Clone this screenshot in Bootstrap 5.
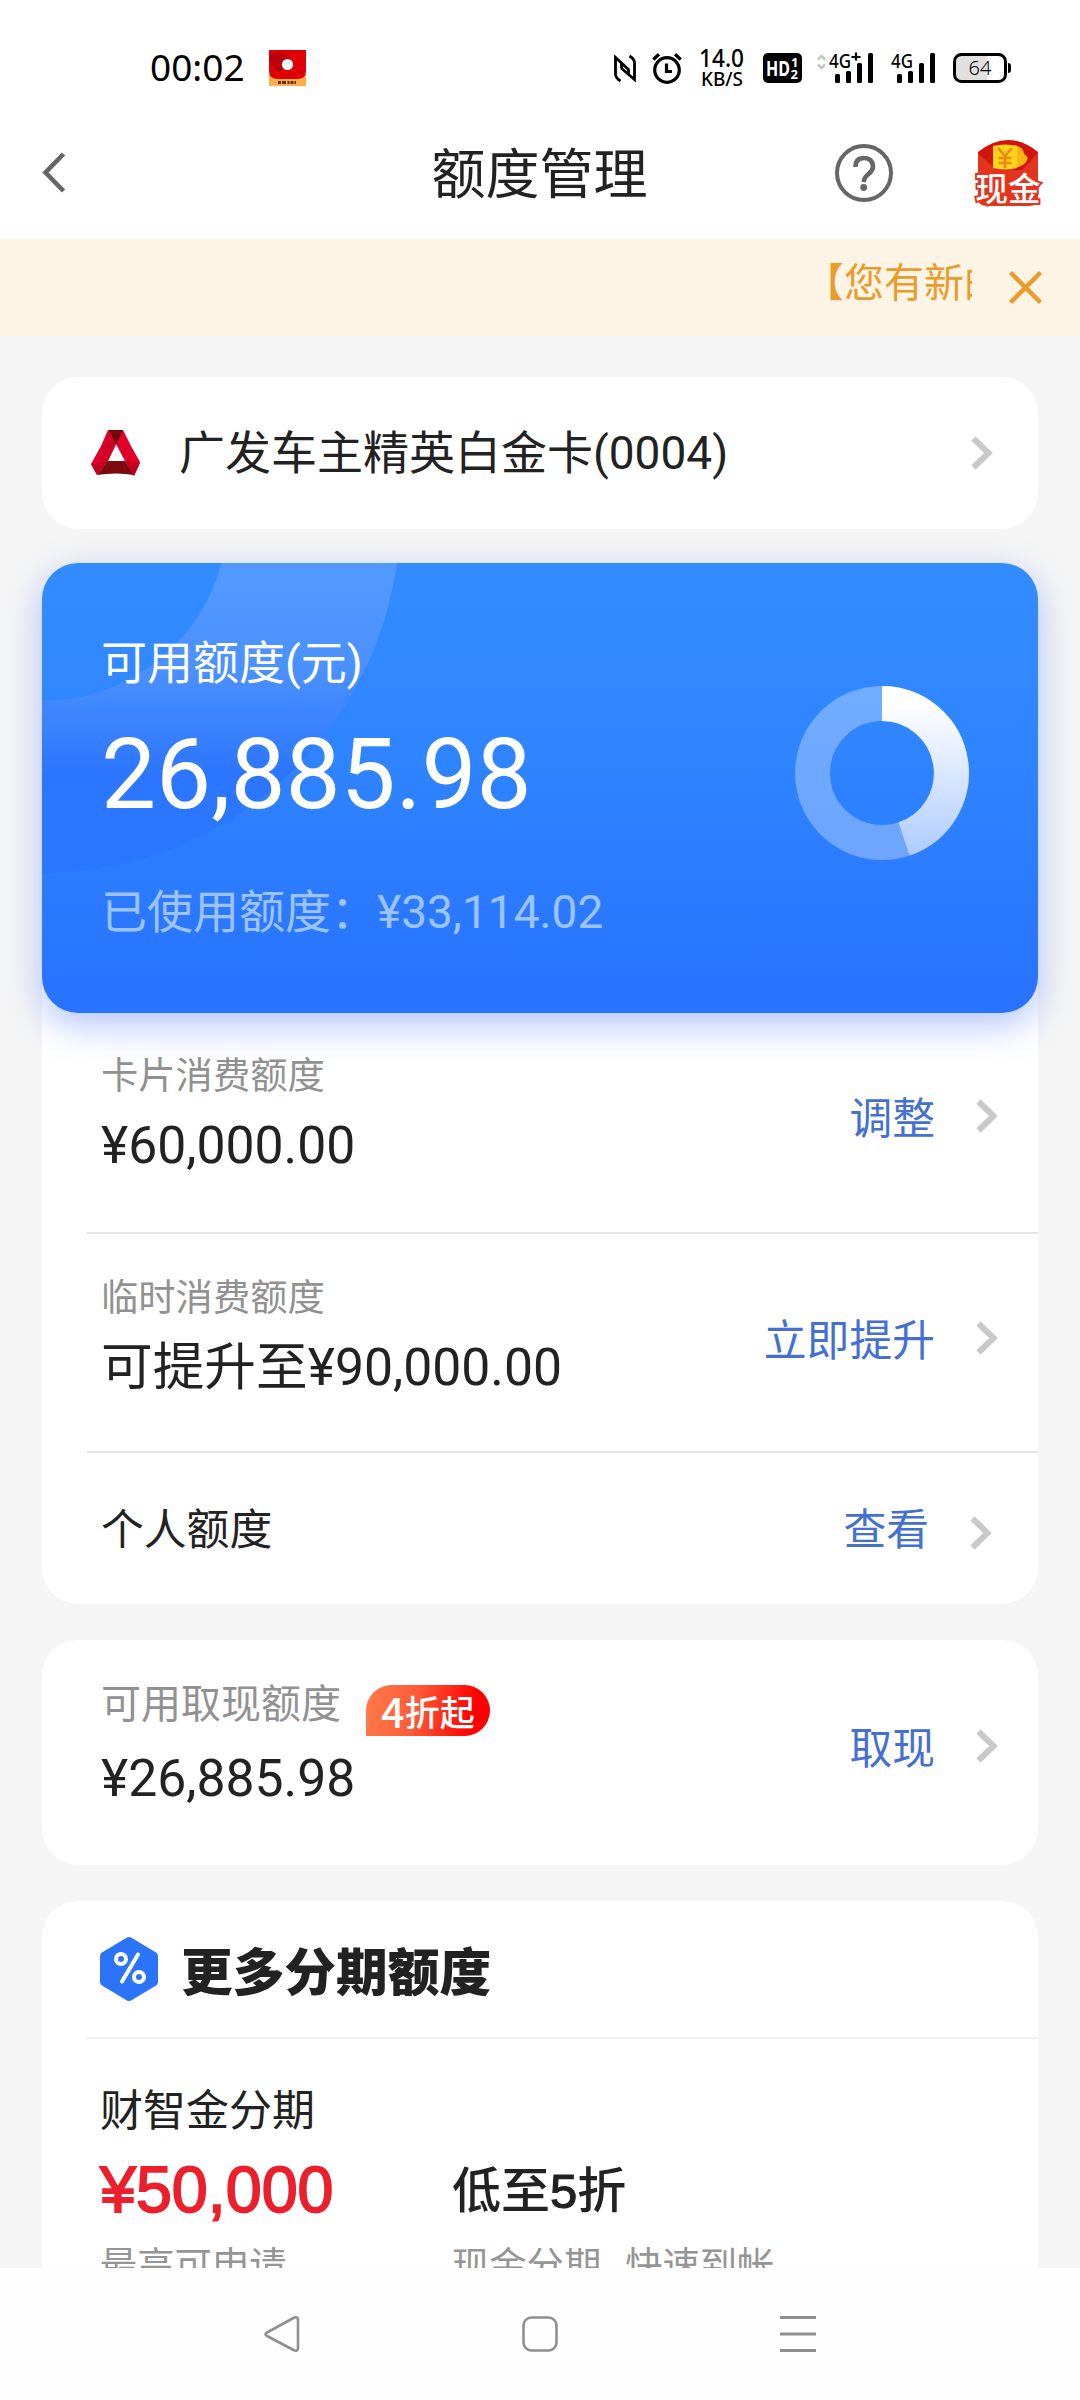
<!DOCTYPE html>
<html lang="zh-CN">
<head>
<meta charset="utf-8">
<meta name="viewport" content="width=device-width, initial-scale=1">
<title>额度管理</title>
<link rel="stylesheet" href="https://cdn.jsdelivr.net/npm/bootstrap@5.3.0/dist/css/bootstrap.min.css">
<style>
  body{font-family:Roboto,"Noto Sans CJK SC",sans-serif;color:#222;background:#fff;-webkit-font-smoothing:antialiased}
  svg{display:block;flex:none;overflow:visible}
  .screen{width:1080px;height:2400px}
  .status{height:110px;padding:26px 69px 0 150px}
  .clock{font:400 37px/82px "Noto Sans",sans-serif;color:#000;width:119px;margin-top:-2px}
  .status svg text{font-family:"Noto Sans",sans-serif}
  .topbar{height:129px;padding:0 40px 3px 42px}
  .topbar .side{width:205px}
  .topbar h1{font-size:54px;line-height:60px;font-weight:400;margin:0 3px 0 0;padding-top:6px}
  .content{background:#f5f5f5;height:2029px}
  .notice{height:97px;background:#fef4e5;color:#e89c2c;padding-right:38px}
  .notice .marquee{width:168px;height:50px;font-size:40px;line-height:50px;margin-top:-8px;margin-right:37px}
  .panel{margin:0 42px;background:#fff;border-radius:36px}
  .bank{height:152px;margin-top:41px;padding:0 45px 0 49px;font-size:46px}
  .bank .cname{margin-left:38px}
  .limit{height:450px;margin:34px 42px -60px;border-radius:36px;color:#fff;padding:0 69px 0 59px;
    background:linear-gradient(#338cff,#2f85ff 40%,#2872ff);box-shadow:0 12px 36px rgba(52,100,255,.38)}
  .limit .halo{left:0;top:0}
  .limit .cap{font-size:46px;line-height:56px;margin-top:72px}
  .limit .big{font-size:98px;line-height:110px;margin-top:29px}
  .limit .used{font-size:46px;line-height:56px;margin-top:54px;color:#9dc3ff}
  .limit .donut{margin-top:123px}
  .details{padding-top:60px}
  .entry{margin-left:45px;padding:38px 40px 0 14px;height:221px;border-bottom:2px solid #e6e6e6}
  .entry.second{height:219px;padding-top:39px}
  .entry.third{height:151px;padding:47px 46px 0 14px;border:0}
  .lbl{font-size:37.3px;line-height:50px;color:#919191}
  .amt{font-size:51.7px;line-height:60px;margin-top:15px}
  .act{font-size:42.8px;line-height:60px;color:#4370d2;gap:41px;margin-top:38px}
  .entry.third .act{margin-top:0}
  .act svg{margin-top:-7px}
  .entry.third .act svg{margin-top:6px}
  .cash{height:225px;margin-top:36px;padding:40px 40px 0 59px}
  .cash .lbl{font-size:40px}
  .cash .amt{margin-top:13px}
  .cash .act{margin-top:39px}
  .off{width:124px;height:51px;margin-left:25px;margin-top:5px;border-radius:26px 26px 26px 0;background:linear-gradient(100deg,#ff7d4a,#ff5a38 40%,#f00 85%);
    color:#fff;font:500 35px/47px "Noto Sans CJK SC",sans-serif}
  .off span{font-size:41px;line-height:1}
  .more{margin-top:36px;height:700px}
  .more .hd{height:138px;margin-left:45px;padding-left:13px;border-bottom:2px solid #f1f1f1;font-weight:700;font-size:51.7px;line-height:60px}
  .more .hd b{margin-left:23px;padding-top:9px}
  .plan{padding:46px 0 0 58px}
  .plan .pname{font-size:43px;line-height:52px}
  .plan .c1{width:352px}
  .money{font-family:"Liberation Sans",sans-serif;font-size:64.600px;line-height:66px;margin-top:20px;color:#ec1f2c;-webkit-text-stroke:1.8px #ec1f2c}
  .rate{font-family:"Noto Sans CJK SC",sans-serif;font-weight:500;font-size:49px;line-height:66px;margin-top:69px}
  .rate span{font-family:"Liberation Sans",sans-serif;line-height:1;-webkit-text-stroke:1.2px}
  .hint{font-size:37.3px;line-height:50px;color:#959595;white-space:nowrap}
  .c1 .hint{margin-top:18px}
  .rate + .hint{margin-top:21px}
  .sysnav{height:132px;background:#fefefe;padding:0 264px}
</style>
</head>
<body>
<div class="screen d-flex flex-column overflow-hidden">

  <div class="status d-flex align-items-center">
    <div class="clock">00:02</div>
    <svg width="37" height="36" viewBox="0 0 37 36">
      <path fill="#fcb045" d="M0 24h37v12H0z"/>
      <path fill="#e00008" d="M0 0h37v21q0 8-9 8H9q-9 0-9-8z"/>
      <path fill="#a3000a" d="M0 4q14-6 22 6l-10 12Q4 20 0 10z" opacity=".6"/>
      <circle cx="18.500" cy="14.500" r="5.600" fill="#fff"/>
      <path stroke="#6b2a10" stroke-width="3" stroke-dasharray="3 1 4 1.500 2 1" d="M9 32.500h18"/>
    </svg>
    <div class="d-flex align-items-center ms-auto">
      <svg width="22" height="29" viewBox="0 0 22 29" fill="none" stroke="#000" stroke-width="2.800">
        <path d="M6.500 27Q1.500 24 1.500 20V3.500L15 16M15.500 2Q20.500 5 20.500 9v16.500L7 14M7.500 14V8.500M14.500 15.500V21"/>
      </svg>
      <svg class="ms-3" width="30" height="32" viewBox="0 0 30 32" fill="none" stroke="#000" stroke-width="3.200">
        <circle cx="15" cy="18" r="12.300"/><path d="M14.500 11.500v8h5.500M1.300 7.500 7 2.300M28.700 7.500 23 2.300"/>
      </svg>
      <svg width="46" height="38" viewBox="0 0 46 38" style="margin-left:17px">
        <text x="0" y="18" font-size="25" font-weight="500" textLength="45" lengthAdjust="spacingAndGlyphs">14.0</text>
        <text x="2" y="37" font-size="19" font-weight="500" textLength="42" lengthAdjust="spacingAndGlyphs">KB/S</text>
      </svg>
      <svg width="39" height="30" viewBox="0 0 39 30" style="margin-left:18px">
        <rect width="39" height="30" rx="5"/>
        <text x="3" y="23" font-size="22" font-weight="700" fill="#fff" textLength="24" lengthAdjust="spacingAndGlyphs">HD</text>
        <text x="28" y="13.500" font-size="13" font-weight="700" fill="#fff">1</text>
        <text x="27.500" y="26" font-size="13" font-weight="700" fill="#fff">2</text>
      </svg>
      <svg width="57" height="30" viewBox="0 0 57 30" style="margin-left:15px">
        <path d="M1 6.500 4.500 3 8 6.500M1 11.500 4.500 15 8 11.500" fill="none" stroke="#c4c4c4" stroke-width="2.500"/>
        <text x="12" y="15" font-size="20" font-weight="500" textLength="22" lengthAdjust="spacingAndGlyphs">4G</text>
        <path d="M34.500 4h9M39-.500v8" stroke="#000" stroke-width="2.200"/>
        <g><rect x="18" y="21" width="5" height="9" rx="1.500"/><rect x="29" y="18" width="5" height="12" rx="1.500"/><rect x="40" y="10" width="5" height="20" rx="1.500"/><rect x="51" y="0" width="5" height="30" rx="1.500"/></g>
      </svg>
      <svg width="45" height="30" viewBox="0 0 45 30" style="margin-left:17px">
        <text x="0" y="15" font-size="20" font-weight="500" textLength="22" lengthAdjust="spacingAndGlyphs">4G</text>
        <rect x="6" y="21" width="5" height="9" rx="1.500"/><rect x="17" y="18" width="5" height="12" rx="1.500"/><rect x="28" y="10" width="5" height="20" rx="1.500"/><rect x="39" y="0" width="5" height="30" rx="1.500"/>
      </svg>
      <svg width="58" height="30" viewBox="0 0 58 30" style="margin-left:17px">
        <path fill="#e0e0e0" d="M8 3h26v24H8q-5 0-5-5V8q0-5 5-5z"/>
        <rect x="1.500" y="1.500" width="51" height="27" rx="7" fill="none" stroke="#000" stroke-width="3"/>
        <path d="M55 10q3 0 3 3v4q0 3-3 3z"/>
        <text x="27" y="22" font-size="20" font-weight="300" text-anchor="middle">64</text>
      </svg>
    </div>
  </div>

  <div class="topbar d-flex align-items-center justify-content-between">
    <div class="side">
      <svg width="24" height="42" viewBox="0 0 24 42" fill="none" stroke="#666" stroke-width="4.600"><path d="M21.500 2 3.500 20.500 21.500 39"/></svg>
    </div>
    <h1>额度管理</h1>
    <div class="side d-flex align-items-center justify-content-between">
      <svg width="58" height="58" viewBox="0 0 58 58" fill="none" stroke="#666">
        <circle cx="29" cy="29" r="27" stroke-width="4"/>
        <path d="M20.500 23Q20.500 14 29 14T38 22.500Q38 26.500 33.500 30T28.700 38" stroke-width="4.600"/>
        <circle cx="28.700" cy="43.500" r="3.400" fill="#666" stroke="none"/>
      </svg>
      <svg width="64" height="66" viewBox="0 0 64 66">
        <path fill="#cf150c" d="M2 12Q32-12 62 12V36H2z"/>
        <path fill="#e5341d" d="M2 13 20 30H46L62 13V58Q62 66 53 66H11Q2 66 2 58z"/>
        <path fill="#fbb616" d="M38 5q10 2 10 9 6 3 2 8t-12 6z"/>
        <path fill="#ffd21c" d="M17 6q12-3 24 0v22q-12 3-24 0z"/>
        <path fill="none" stroke="#e98a12" stroke-width="2.600" d="M22 8l7 8 7-8M29 16v12M22.500 18h13M22.500 23h13"/>
        <text x="32" y="61" font-size="32.500" font-weight="500" fill="#fff" stroke="#e5341d" stroke-width="4" paint-order="stroke" text-anchor="middle">现金</text>
      </svg>
    </div>
  </div>

  <div class="content overflow-hidden">
    <div class="notice d-flex align-items-center justify-content-end">
      <div class="marquee overflow-hidden text-nowrap">【您有新的</div>
      <svg width="33" height="33" viewBox="0 0 33 33" stroke="#e89c2c" stroke-width="4.500"><path d="M1.500 1.500l30 30M31.500 1.500l-30 30"/></svg>
    </div>

    <div class="panel bank d-flex align-items-center">
      <svg width="50" height="46" viewBox="0 0 50 46">
        <path fill="#e0002a" d="M17 0H32L40 16 49 32 43 46 34 31 25 14 17 31 6 45 0 34 10 16z"/>
        <path fill="#6e0a0c" d="M18 0H32L25 15z"/>
        <path fill="#c00020" d="M18 0 25 15 17 31 8 30z" opacity=".45"/>
        <path fill="#7c0b0f" d="M17 31H34L43 45Q25 42 6 45z"/>
        <path fill="#c30020" d="M0 34 17 31 6 45zM49 33 34 31 43 46z"/>
      </svg>
      <div class="cname">广发车主精英白金卡(0004)</div>
      <svg class="ms-auto" width="22" height="34" viewBox="0 0 22 34" fill="none" stroke="#c9c9c9" stroke-width="6"><path d="M2.500 2.500l15 14.500-15 14.500"/></svg>
    </div>

    <div class="limit position-relative d-flex justify-content-between align-items-start overflow-visible">
      <svg class="halo position-absolute" width="996" height="450" viewBox="0 0 996 450">
        <defs>
          <linearGradient id="halo" gradientUnits="userSpaceOnUse" x1="0" y1="0" x2="0" y2="310"><stop offset="0" stop-color="#539aff"/><stop offset=".35" stop-color="#4a90ff"/><stop offset=".68" stop-color="#2c76ff"/><stop offset="1" stop-color="#2a77ff"/></linearGradient>
          <clipPath id="edge"><rect width="996" height="450" rx="36"/></clipPath>
        </defs>
        <path clip-path="url(#edge)" fill="url(#halo)" fill-rule="evenodd" d="M-358-48a358 358 0 0 0 716 0a358 358 0 0 0-716 0zM-186-48a186 186 0 0 0 372 0a186 186 0 0 0-372 0z"/>
      </svg>
      <div class="position-relative">
        <div class="cap">可用额度(元)</div>
        <div class="big">26,885.98</div>
        <div class="used">已使用额度：¥33,114.02</div>
      </div>
      <svg class="donut position-relative" width="174" height="174" viewBox="-87 -87 174 174" fill="none" stroke-width="35">
        <defs><linearGradient id="arc" gradientUnits="userSpaceOnUse" x1="0" y1="-70" x2="0" y2="87"><stop offset="0" stop-color="#fff"/><stop offset="1" stop-color="#abcaff"/></linearGradient></defs>
        <circle r="69.500" stroke="#fff" stroke-opacity=".31"/>
        <path stroke="url(#arc)" d="M0-69.500A69.500 69.500 0 0 1 22 65.900"/>
      </svg>
    </div>

    <div class="panel details">
      <div class="entry d-flex justify-content-between align-items-start">
        <div><div class="lbl">卡片消费额度</div><div class="amt">¥60,000.00</div></div>
        <div class="act d-flex align-items-center">调整<svg width="22" height="34" viewBox="0 0 22 34" fill="none" stroke="#c9c9c9" stroke-width="6"><path d="M2.500 2.500l15 14.500-15 14.500"/></svg></div>
      </div>
      <div class="entry second d-flex justify-content-between align-items-start">
        <div><div class="lbl">临时消费额度</div><div class="amt">可提升至¥90,000.00</div></div>
        <div class="act d-flex align-items-center">立即提升<svg width="22" height="34" viewBox="0 0 22 34" fill="none" stroke="#c9c9c9" stroke-width="6"><path d="M2.500 2.500l15 14.500-15 14.500"/></svg></div>
      </div>
      <div class="entry third d-flex justify-content-between align-items-start">
        <div class="act text-reset">个人额度</div>
        <div class="act d-flex align-items-center">查看<svg width="22" height="34" viewBox="0 0 22 34" fill="none" stroke="#c9c9c9" stroke-width="6"><path d="M2.500 2.500l15 14.500-15 14.500"/></svg></div>
      </div>
    </div>

    <div class="panel cash d-flex justify-content-between align-items-start">
      <div>
        <div class="d-flex align-items-start"><div class="lbl">可用取现额度</div><div class="off d-flex align-items-center justify-content-center"><span>4</span>折起</div></div>
        <div class="amt">¥26,885.98</div>
      </div>
      <div class="act d-flex align-items-center">取现<svg width="22" height="34" viewBox="0 0 22 34" fill="none" stroke="#c9c9c9" stroke-width="6"><path d="M2.500 2.500l15 14.500-15 14.500"/></svg></div>
    </div>

    <div class="panel more">
      <div class="hd d-flex align-items-center">
        <svg width="58" height="64" viewBox="0 0 58 64">
          <path fill="#2b74f8" stroke="#2b74f8" stroke-width="8" stroke-linejoin="round" d="M29 4 54 19V45L29 60 4 45V19z"/>
          <g fill="none" stroke="#fff" stroke-width="4"><circle cx="21" cy="22" r="5"/><circle cx="39" cy="40" r="5"/><path d="M38 17.500 22 44.500" stroke-linecap="round"/></g>
        </svg>
        <b>更多分期额度</b>
      </div>
      <div class="plan d-flex">
        <div class="c1">
          <div class="pname">财智金分期</div>
          <div class="money">¥50,000</div>
          <div class="hint">最高可申请</div>
        </div>
        <div>
          <div class="rate">低至<span>5</span>折</div>
          <div class="hint d-flex"><span class="me-4">现金分期</span><span>快速到帐</span></div>
        </div>
      </div>
    </div>
  </div>

  <div class="sysnav d-flex align-items-center justify-content-between">
    <svg width="36" height="36" viewBox="0 0 36 36" fill="none" stroke="#8f8f8f" stroke-width="2.600" stroke-linejoin="round"><path d="M3 16.500 29.500 2Q34 0 34 4V32Q34 36 29.500 34L3 20Q0 18 3 16.500z"/></svg>
    <svg width="36" height="36" viewBox="0 0 36 36" fill="none" stroke="#8f8f8f" stroke-width="2.600"><rect x="1.500" y="1.500" width="33" height="33" rx="8"/></svg>
    <svg width="36" height="36" viewBox="0 0 36 36" stroke="#8f8f8f" stroke-width="3"><path d="M0 1.500h36M0 18h36M0 34.500h36"/></svg>
  </div>
</div>
<script src="https://cdn.jsdelivr.net/npm/bootstrap@5.3.0/dist/js/bootstrap.bundle.min.js"></script>
</body>
</html>
